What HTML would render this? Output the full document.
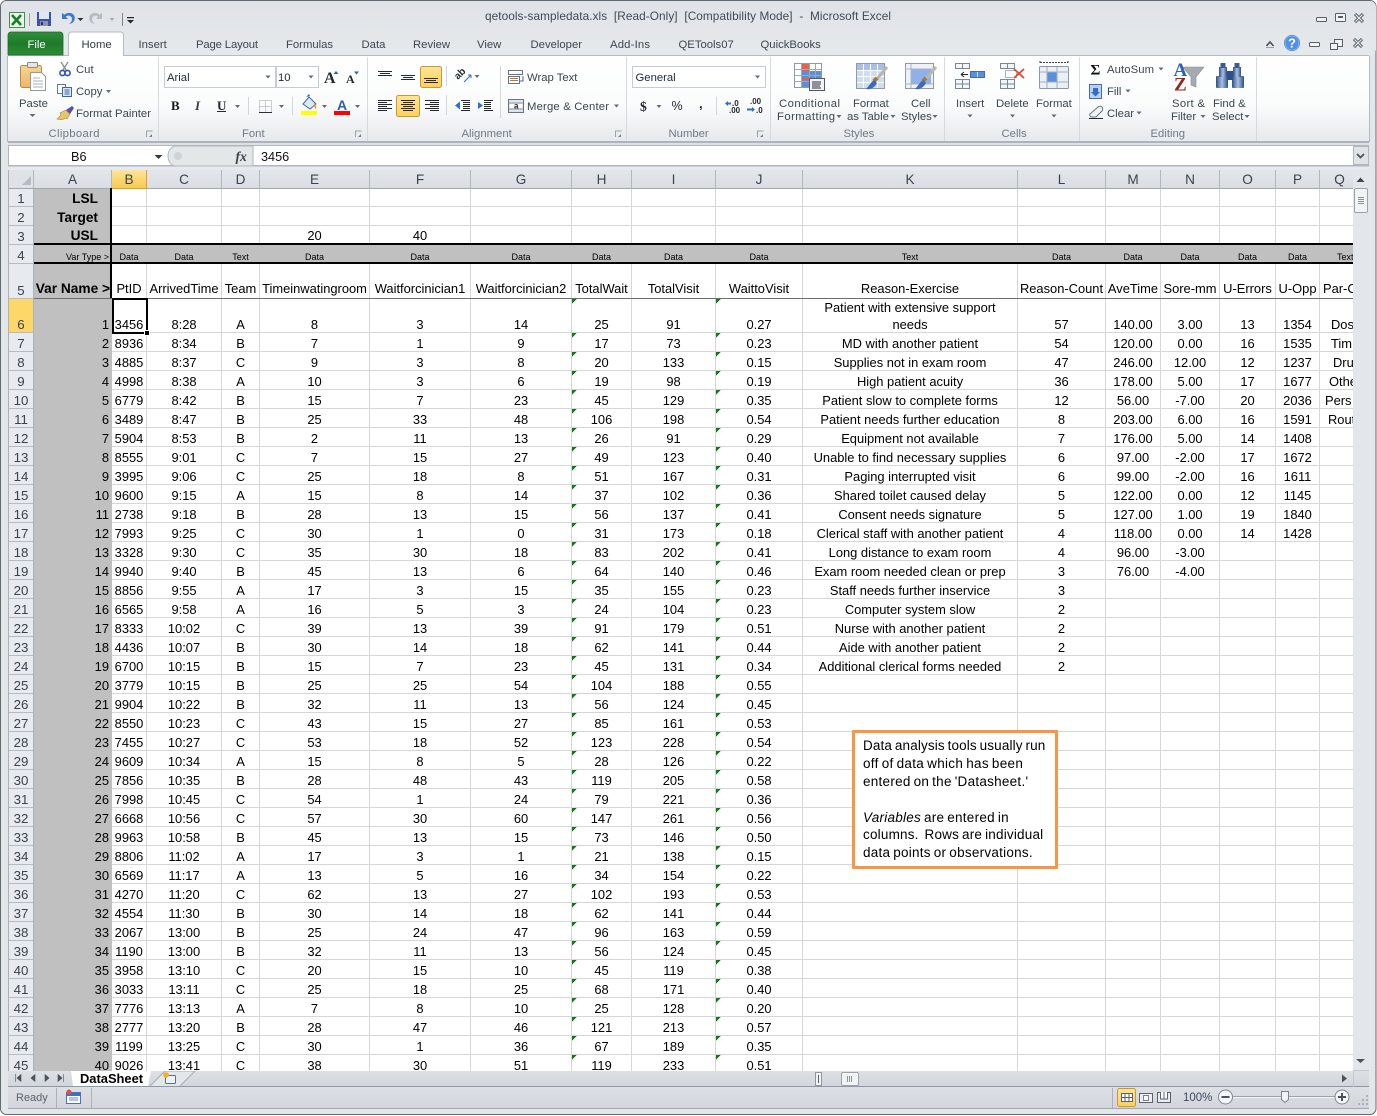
<!DOCTYPE html>
<html><head><meta charset="utf-8"><title>qetools-sampledata.xls - Microsoft Excel</title>
<style>
html,body{margin:0;padding:0;background:#fff}
#w{position:relative;width:1377px;height:1116px;overflow:hidden;background:#fff}
svg#c{position:absolute;left:0;top:0}
svg text{font-family:"Liberation Sans",sans-serif;font-size:11.3px;fill:#3c4650;white-space:pre}
.k{fill:#1e2a36}
.l{fill:#6f7a85}
.a{fill:#5f6b78}
.s{font-family:"Liberation Serif",serif}
#g{position:absolute;left:9px;top:170px;width:1344px;height:901px;overflow:hidden;background:#fff}
table{border-collapse:separate;border-spacing:0;table-layout:fixed;width:1351px}
tr{height:19px}
td,th{box-sizing:border-box;padding:0;white-space:nowrap;overflow:hidden;font-family:"Liberation Sans",sans-serif;font-weight:normal}
td{border-right:1px solid #d6d6d6;border-bottom:1px solid #d6d6d6;text-align:center;vertical-align:bottom;font-size:12.9px;line-height:14px;color:#000}
th{border-right:1px solid #a9b1bb;border-bottom:1px solid #b4bbc4;background:#e7ebf0;color:#39424d;font-size:13.3px;line-height:15px;text-align:center;vertical-align:bottom}
tr.h th{background:linear-gradient(#e3e6ea,#dadee3);vertical-align:middle;border-bottom:1px solid #9fa7b1;border-right:1px solid #b0b7bf;color:#3a434e;font-size:13.6px}
tr.h th.on{background:linear-gradient(#fde69a,#f9c94f);border-right:1px solid #e0a030;border-bottom:1px solid #e0a030}
th.on{background:#fdd768}
td:nth-child(2){background:#c0c0c0;text-align:right;border-color:#c0c0c0;padding-right:2px}
td:nth-child(9),td:nth-child(11){background:linear-gradient(135deg,#0b7d12 0,#0b7d12 3.4px,transparent 3.5px) no-repeat 0 0/6px 6px}
tr.n td:nth-child(9),tr.n td:nth-child(11){background:none}
td b{font-weight:bold;font-size:13.7px}
tr.t td:nth-child(2){padding-right:13px}
tr.r4 td{background:#c0c0c0!important;border-color:#c0c0c0;font-size:9px;line-height:11px;padding-bottom:0}
tr.r5 td{padding-bottom:1px;line-height:16px}
tr.r5 td:nth-child(2){padding-right:1px}
td.q{text-align:left;overflow:hidden}
.o{position:absolute}
#box{position:absolute;left:852px;top:730px;width:206px;height:139px;box-sizing:border-box;border:3px solid #f79646;background:#fff;padding:4px 0 0 8px;font:13.5px/17.9px "Liberation Sans",sans-serif;color:#000;word-spacing:-1px;white-space:pre;border-radius:1px}
#box span{display:block;height:17.9px}
</style></head><body><div id="w">
<svg id="c" width="1377" height="1116" viewBox="0 0 1377 1116" xmlns="http://www.w3.org/2000/svg">
<defs>
<linearGradient id="tb" x1="0" y1="0" x2="0" y2="1"><stop offset="0" stop-color="#dfe3e7"/><stop offset="1" stop-color="#e6e9ec"/></linearGradient>
<linearGradient id="rb" x1="0" y1="0" x2="0" y2="1"><stop offset="0" stop-color="#ffffff"/><stop offset=".55" stop-color="#fbfcfc"/><stop offset="1" stop-color="#e6e9ed"/></linearGradient>
<linearGradient id="gr" x1="0" y1="0" x2="0" y2="1"><stop offset="0" stop-color="#2f8f3a"/><stop offset=".5" stop-color="#1f7a2a"/><stop offset="1" stop-color="#2c8d33"/></linearGradient>
<linearGradient id="or" x1="0" y1="0" x2="0" y2="1"><stop offset="0" stop-color="#ffe596"/><stop offset="1" stop-color="#fdd05a"/></linearGradient>
<linearGradient id="sb" x1="0" y1="0" x2="0" y2="1"><stop offset="0" stop-color="#dde1e6"/><stop offset="1" stop-color="#d2d6dc"/></linearGradient>
<linearGradient id="bn" x1="0" y1="0" x2="1" y2="0"><stop offset="0" stop-color="#2f4f86"/><stop offset=".5" stop-color="#a9c0e2"/><stop offset="1" stop-color="#2f4f86"/></linearGradient>
<linearGradient id="pb" x1="0" y1="0" x2="0" y2="1"><stop offset="0" stop-color="#f7d596"/><stop offset="1" stop-color="#eeb566"/></linearGradient>
</defs>
<!-- frame -->
<rect x=".5" y=".5" width="1375.5" height="1114" rx="6" fill="#e4e7ea" stroke="#5e6a74"/>
<rect x="1" y="1" width="1375" height="54" rx="6" fill="url(#tb)"/>
<!-- QAT -->
<rect x="9.5" y="12.5" width="15" height="15" fill="#eef6e8" stroke="#4a8a4a"/>
<path d="M12 15l9 10M21 15l-9 10" stroke="#17802a" stroke-width="2.6" fill="none"/>
<path d="M29.500 13v13" stroke="#9aa3ac"/>
<rect x="37" y="12" width="14" height="14" fill="#3c50b4"/><rect x="39" y="12" width="10" height="7" fill="#dfe6f5"/><rect x="40" y="21" width="8" height="5" fill="#8c96a8"/><rect x="41" y="22" width="2" height="3" fill="#2a3470"/>
<path d="M62 13v6h6l-2.200-2.200c2.500-2.300 6-.8 6.200 2 .1 2-1 4-3 5.200 4.500-.5 6.500-4 5.500-7.500-1-3.500-6-5.200-10-1.900z" fill="#3c79c9"/>
<path d="M77.500 18h6l-3 3z" fill="#2a2f35"/>
<path d="M102 13v6h-6l2.200-2.200c-2.500-2.300-6-.8-6.200 2-.1 2 1 4 3 5.200-4.500-.5-6.500-4-5.500-7.500 1-3.500 6-5.200 10-1.900z" fill="#b6bbc0"/>
<path d="M109.500 18h5l-2.500 3z" fill="#a5abb1"/>
<path d="M122.500 13v13" stroke="#7d868f"/>
<path d="M127 17h7v1.200h-7zM127 20h7l-3.500 3.500z" fill="#23282e"/>
<text x="485" y="20" textLength="406" style="font-size:11.8px;fill:#3e4a56">qetools-sampledata.xls  [Read-Only]  [Compatibility Mode]  -  Microsoft Excel</text>
<!-- window controls -->
<rect x="1316.500" y="17.500" width="10" height="4" rx="1" fill="#f2f4f5" stroke="#56606b"/>
<rect x="1335.500" y="13.500" width="10" height="8" rx="1" fill="#f2f4f5" stroke="#56606b"/><rect x="1338" y="16" width="5" height="2" fill="#56606b"/>
<path d="M1355 14l8 8M1363 14l-8 8" stroke="#5d6873" stroke-width="3.200"/><path d="M1355.500 14.500l7 7M1362.500 14.500l-7 7" stroke="#eef0f2" stroke-width="1"/>
<path d="M1266.500 46l3.500-4 3.500 4" fill="none" stroke="#48525c" stroke-width="1.600"/><path d="M1266 47.500h8" stroke="#9ba3ab"/>
<circle cx="1292" cy="43" r="8" fill="#3f83d6"/><circle cx="1292" cy="43" r="7" fill="#4f92e0" stroke="#a9cbf0" stroke-width=".6"/>
<text x="1292" y="47.500" text-anchor="middle" style="font-size:13px;font-weight:bold;fill:#fff">?</text>
<rect x="1309.500" y="42.500" width="10" height="4" rx="1" fill="#f2f4f5" stroke="#56606b"/>
<rect x="1334.500" y="39.500" width="8" height="7" fill="#f2f4f5" stroke="#56606b"/><rect x="1330.500" y="43.500" width="7" height="6" fill="#f2f4f5" stroke="#56606b"/>
<path d="M1354 39l8 8M1362 39l-8 8" stroke="#5d6873" stroke-width="3.200"/><path d="M1354.500 39.500l7 7M1361.500 39.500l-7 7" stroke="#eef0f2" stroke-width="1"/>
<!-- tabs -->
<path d="M8 55.500h1361" stroke="#b4bbc2"/>
<path d="M8 55v-20a3 3 0 0 1 3-3h49a3 3 0 0 1 3 3v20z" fill="url(#gr)" stroke="#1d6c27" stroke-width=".8"/>
<text x="27.500" y="48" style="fill:#fff;font-size:11.300px">File</text>
<path d="M68.500 56v-21a3 3 0 0 1 3-3h49a3 3 0 0 1 3 3v21z" fill="#fff" stroke="#b4bbc2"/>
<text x="81.500" y="48" style="fill:#2e3842">Home</text>
<g class="tabs">
<text x="138.500" y="48">Insert</text><text x="196" y="48" textLength="62">Page Layout</text><text x="286" y="48">Formulas</text><text x="361.500" y="48">Data</text><text x="413" y="48">Review</text><text x="477" y="48">View</text><text x="530.500" y="48">Developer</text><text x="610" y="48" textLength="40">Add-Ins</text><text x="678.500" y="48">QETools07</text><text x="760.500" y="48">QuickBooks</text>
</g>
<!-- ribbon -->
<rect x="8" y="56" width="1361" height="86" fill="url(#rb)"/>
<rect x="69" y="54" width="54" height="3" fill="#fff"/>
<path d="M7.500 56v86M1369.500 56v86" stroke="#b4bbc2"/>
<path d="M8 142h1361" stroke="#9aa2aa" stroke-width="1.400"/><rect x="8" y="143" width="1361" height="3" fill="#dde1e5"/>
<g stroke="#d6dade"><path d="M158.500 57v84M367.500 57v84M626.500 57v84M770.500 57v84M944.500 57v84M1079.500 57v84M1256.500 57v84"/></g>
<g class="grp">
<text x="48.500" y="137" textLength="51" style="fill:#6f7a85">Clipboard</text><text x="242" y="137" style="fill:#6f7a85">Font</text><text x="461.500" y="137" style="fill:#6f7a85">Alignment</text><text x="668.500" y="137" style="fill:#6f7a85">Number</text><text x="843.500" y="137" style="fill:#6f7a85">Styles</text><text x="1001.500" y="137" style="fill:#6f7a85">Cells</text><text x="1150.500" y="137" style="fill:#6f7a85">Editing</text>
</g>
<g fill="none" stroke="#9aa2aa"><path d="M146.500 137v-6h6M355.500 137v-6h6M615.500 137v-6h6M757.500 137v-6h6"/></g>
<g fill="#7a838c"><path d="M149 137l3-3v3zM358 137l3-3v3zM618 137l3-3v3zM760 137l3-3v3z"/></g>
<!-- clipboard -->
<rect x="20.500" y="65.500" width="21" height="22" rx="2" fill="url(#pb)" stroke="#b58a4a"/>
<rect x="27.500" y="62.500" width="10" height="5" rx="1" fill="#e7e7e2" stroke="#8c8c84"/>
<path d="M30.500 72.500h11l4 4v14h-15z" fill="#fff" stroke="#8f9aa6"/>
<path d="M33 78h7M33 81h10M33 84h10M33 87h10" stroke="#a8b1bb"/>
<text x="19" y="107">Paste</text><path class="a" d="M29.500 114h6l-3 3z"/>
<path d="M61 62l5 8M68 62l-5 8" stroke="#8b95a1" stroke-width="1.500"/><circle cx="62.500" cy="73" r="2.600" fill="none" stroke="#2c54b0" stroke-width="1.600"/><circle cx="67.500" cy="73" r="2.600" fill="none" stroke="#2c54b0" stroke-width="1.600"/>
<text x="76" y="73">Cut</text>
<rect x="57.500" y="84.500" width="8" height="9" fill="#fff" stroke="#5b78a8"/><rect x="62.500" y="87.500" width="9" height="9" fill="#dbe6f6" stroke="#3e64a6"/><path d="M64.500 90h5M64.500 92h5M64.500 94h5" stroke="#3e64a6"/>
<text x="76" y="95">Copy</text><path class="a" d="M106 90h5l-2.500 3z"/>
<path d="M57 119c2-1 3-3 4-5l-1-1 6-3 4 4-3 5-2-1c-2 2-5 2-8 1z" fill="#e7c66a" stroke="#a78a3a" stroke-width=".6"/><path d="M66 110l6-4 2 2-4 6z" fill="#5b4fa8"/>
<text x="76" y="117" textLength="75">Format Painter</text>
<!-- font -->
<rect x="164.500" y="66.500" width="111" height="21" fill="#fff" stroke="#c6ccd3"/><rect x="276.500" y="66.500" width="42" height="21" fill="#fff" stroke="#c6ccd3"/>
<text x="167" y="81" style="fill:#1e2a36">Arial</text><text x="278" y="81" style="fill:#1e2a36">10</text>
<path class="a" d="M265.500 75.500h5l-2.500 3zM308.500 75.500h5l-2.500 3z"/>
<text x="324" y="83" style="font-family:'Liberation Serif',serif;font-size:16px;font-weight:bold;fill:#22282e">A</text><path d="M333.500 74l2.500-3 2.500 3z" fill="#2d5fb0"/>
<text x="346" y="83" style="font-family:'Liberation Serif',serif;font-size:12px;font-weight:bold;fill:#22282e">A</text><path d="M354 71.500h5l-2.500 3z" fill="#2d5fb0"/>
<text x="171" y="110" style="font-family:'Liberation Serif',serif;font-size:13px;font-weight:bold;fill:#15191d">B</text>
<text x="195" y="110" style="font-family:'Liberation Serif',serif;font-size:13px;font-weight:bold;font-style:italic;fill:#3a3f45">I</text>
<text x="217" y="110" style="font-family:'Liberation Serif',serif;font-size:13px;font-weight:bold;fill:#22282e">U</text><path d="M217 111.500h9" stroke="#22282e"/>
<path class="a" d="M235 105h5l-2.500 3zM279 105h5l-2.500 3zM322 105h5l-2.500 3zM355 105h5l-2.500 3z"/>
<path d="M248.500 97v18M292.500 97v18" stroke="#d2d6da"/>
<path d="M259.500 100.500h12v12h-12zM265.500 100.500v12M259.500 106.500h12" fill="none" stroke="#9aa2aa" stroke-dasharray="1 1"/><path d="M259 112.500h13" stroke="#2a2f35"/>
<path d="M303 104l6-7 7 7-6 5z" fill="#dfe8f5" stroke="#3e6cb0"/><path d="M306 97l3-3 1 2z" fill="#3e6cb0"/><path d="M314 103c2 2 3 4 2 6-1 0-2-2-2-6z" fill="#e6a020"/><rect x="301" y="111" width="16" height="4" fill="#ffff00"/>
<text x="337" y="110" style="font-size:14px;font-weight:bold;fill:#2f5fa8">A</text><rect x="334" y="111" width="16" height="4" fill="#ff0000"/>
<!-- alignment -->
<rect x="420.500" y="66.500" width="21" height="21" rx="2" fill="url(#or)" stroke="#c29a3c"/>
<rect x="396.500" y="95.500" width="23" height="21" rx="2" fill="url(#or)" stroke="#c29a3c"/>
<g stroke="#23282e"><path d="M378 71.500h14M380 73.500h10M378 75.500h14"/><path d="M401 75.500h14M403 77.500h10M401 79.500h14"/><path d="M424 78.500h14M426 80.500h10M424 82.500h14"/>
<path d="M378 100.500h14M378 102.500h9M378 104.500h14M378 106.500h9M378 108.500h14M378 110.500h9"/>
<path d="M401 100.500h14M403 102.500h10M401 104.500h14M403 106.500h10M401 108.500h14M403 110.500h10"/>
<path d="M425 100.500h14M430 102.500h9M425 104.500h14M430 106.500h9M425 108.500h14M430 110.500h9"/></g>
<path d="M446.500 66v20M446.500 95v20M500.500 66v52" stroke="#d4d8dc"/>
<text x="0" y="0" transform="translate(458 80) rotate(-45)" style="font-size:10px;font-weight:bold;fill:#23282e">ab</text><path d="M464 82l7-7M471 75h-3M471 75v3" stroke="#3a6cb0" fill="none"/>
<path class="a" d="M474.500 75h5l-2.500 3z"/>
<path d="M461 100.500h9M463 102.500h7M463 104.500h7M463 106.500h7M463 108.500h7M461 110.500h9M484 100.500h9M484 102.500h7M484 104.500h7M484 106.500h7M484 108.500h7M484 110.500h9" stroke="#23282e"/>
<path d="M455 105.500l5-4v8zM478 102v7l5-3.500z" fill="#2f6fc8"/>
<rect x="508.500" y="70.500" width="14" height="4" fill="#fff" stroke="#6a7480"/><rect x="508.500" y="76.500" width="11" height="7" fill="#fff" stroke="#6a7480"/><path d="M510 78.500h8M510 80.500h8" stroke="#b5763a"/><path d="M523 76v5h-3" fill="none" stroke="#3a6cb0"/>
<text x="527" y="81">Wrap Text</text>
<rect x="508.500" y="99.500" width="15" height="13" fill="#dfe5ec" stroke="#6a7480"/><path d="M509 103h14M509 109h14" stroke="#8f99a4"/><rect x="510" y="104" width="12" height="4" fill="#fff"/><text x="514" y="108.500" style="font-size:8px;font-weight:bold;fill:#23282e">a</text>
<text x="527" y="110" textLength="82">Merge &amp; Center</text><path class="a" d="M614 104.500h5l-2.500 3z"/>
<!-- number -->
<rect x="632.500" y="66.500" width="133" height="21" fill="#fff" stroke="#c6ccd3"/>
<text x="635.500" y="81" style="fill:#1e2a36">General</text><path class="a" d="M755 75.500h5l-2.500 3z"/>
<text x="640" y="111" style="font-family:'Liberation Serif',serif;font-size:13.500px;font-weight:bold;fill:#22282e">$</text>
<path class="a" d="M656.500 105h5l-2.500 3z"/>
<text x="671.500" y="110" style="font-size:12.500px;fill:#22282e">%</text>
<text x="699" y="108" style="font-size:13px;font-weight:bold;fill:#22282e">,</text>
<path d="M716.500 97v18" stroke="#d2d6da"/>
<text x="732" y="106" style="font-size:8px;font-weight:bold;fill:#22282e">.0</text><text x="729" y="113" style="font-size:8px;font-weight:bold;fill:#22282e">.00</text><path d="M725 103.500l3-2.500v1.500h3v2h-3v1.500z" fill="#2f6fc8"/>
<text x="750" y="104" style="font-size:8px;font-weight:bold;fill:#22282e">.00</text><text x="756" y="113" style="font-size:8px;font-weight:bold;fill:#22282e">.0</text><path d="M755 109.500l-3-2.500v1.500h-5v2h5v1.500z" fill="#2f6fc8"/>
<!-- styles -->
<g fill="#fff" stroke="#8f9aa6"><rect x="794.500" y="63.500" width="27" height="24"/></g>
<rect x="802" y="64" width="7" height="23" fill="#ef5d45"/><rect x="802" y="71" width="19" height="7" fill="#5b8fdc"/>
<rect x="802" y="80" width="7" height="7" fill="#5b8fdc"/>
<path d="M801.500 64v23M809.500 64v23M815.500 64v23M795 69.500h26M795 75.500h26M795 81.500h26" stroke="#9fa9b4"/>
<rect x="809.500" y="78.500" width="15" height="12" fill="#f2f4f6" stroke="#4f5a66"/><path d="M812 82h9M812 84h9M812 86l8 0M812 88h9" stroke="#2a2f35"/>
<text x="779" y="107" textLength="61">Conditional</text><text x="777" y="120" textLength="58">Formatting</text><path class="a" d="M836.500 115h5l-2.500 3z"/>
<rect x="856.500" y="63.500" width="28" height="25" fill="#cfdcf2" stroke="#8f9aa6"/><rect x="857" y="64" width="27" height="6" fill="#a9c0e6"/>
<path d="M863.500 64v24M870.500 64v24M877.500 64v24M857 70.500h27M857 76.500h27M857 82.500h27" stroke="#fff"/>
<path d="M887 67l-11 13" stroke="#b9b7a8" stroke-width="3"/><path d="M877 78l-3 3" stroke="#a07a3a" stroke-width="4"/><path d="M874 80c-3 2-5 6-8 9 5 1 9-2 11-6z" fill="#3d6cb8"/>
<text x="853" y="107">Format</text><text x="847" y="120">as Table</text><path class="a" d="M890.500 115h5l-2.500 3z"/>
<rect x="905.500" y="63.500" width="28" height="25" fill="#eef2f8" stroke="#8f9aa6"/><rect x="911" y="69" width="20" height="15" fill="#8fb0ea"/>
<path d="M911 64v24M905 69h28M905 84h28" stroke="#aab4c0"/>
<path d="M936 67l-11 13" stroke="#b9b7a8" stroke-width="3"/><path d="M926 78l-3 3" stroke="#a07a3a" stroke-width="4"/><path d="M923 80c-3 2-5 6-8 9 5 1 9-2 11-6z" fill="#3d6cb8"/>
<text x="911" y="107">Cell</text><text x="901" y="120">Styles</text><path class="a" d="M932.500 115h5l-2.500 3z"/>
<!-- cells -->
<g fill="#f3f6fa" stroke="#7a8794"><rect x="955.500" y="63.500" width="14" height="5"/><path d="M962.500 64v4"/><rect x="955.500" y="79.500" width="14" height="9"/><path d="M962.500 80v8M956 84h13"/></g>
<rect x="970.500" y="71.500" width="14" height="6" fill="#5b8fdc" stroke="#3d6cb8"/><path d="M977.500 72v5" stroke="#cfe0f8"/>
<path d="M961 74.500h7M961 74.500l3-2.500M961 74.500l3 2.500" stroke="#23282e" fill="none"/>
<g fill="#f3f6fa" stroke="#7a8794"><rect x="1000.500" y="63.500" width="14" height="5"/><path d="M1007.500 64v4"/><rect x="1000.500" y="79.500" width="14" height="9"/><path d="M1007.500 80v8M1001 84h13"/></g>
<rect x="1005.500" y="70.500" width="11" height="7" fill="#fff" stroke="#3d6cb8" stroke-dasharray="1 1"/>
<path d="M1014 69l10 9M1024 69l-10 9" stroke="#e8432e" stroke-width="1.800"/>
<path d="M1040 62.500h28M1040 61v3M1068 61v3" stroke="#3a424b" stroke-dasharray="2 1"/>
<rect x="1039.500" y="66.500" width="29" height="22" rx="1" fill="#eaf0f8" stroke="#8a97a5"/><rect x="1047" y="72" width="10" height="10" fill="#5b8fdc"/>
<path d="M1047 67v21M1057 67v21M1040 72h29M1040 82h29" stroke="#a3aeba"/>
<text x="956" y="107">Insert</text><text x="996" y="107">Delete</text><text x="1036" y="107">Format</text>
<path class="a" d="M967.500 114.500h5l-2.500 3zM1010 114.500h5l-2.500 3zM1051.500 114.500h5l-2.500 3z"/>
<!-- editing -->
<text x="1090.500" y="74.500" style="font-family:'Liberation Serif',serif;font-size:15px;font-weight:bold;fill:#111">Σ</text>
<text x="1107" y="73" textLength="47">AutoSum</text><path class="a" d="M1158.500 67.500h5l-2.500 3z"/>
<rect x="1089.500" y="84.500" width="12" height="14" fill="#bcd2f0" stroke="#3d6cb8"/><path d="M1093 88h5v4h2l-4.500 4.500-4.500-4.500h2z" fill="#2f6fc8"/>
<text x="1107" y="95">Fill</text><path class="a" d="M1125.500 89.500h5l-2.500 3z"/>
<path d="M1090 114l8-7c1-1 3-1 4 0 1 1 1 3 0 4l-6 6h-5c-1-1-2-2-1-3z" fill="#eef1f5" stroke="#6a7480"/><path d="M1089 118.500h14" stroke="#23282e"/>
<text x="1107" y="117">Clear</text><path class="a" d="M1136.500 111.500h5l-2.500 3z"/>
<path d="M1183 67h21l-8 10v10l-5-2v-8z" fill="#a4aab0" stroke="#868c92" stroke-width=".6"/>
<text x="1173.500" y="76" style="font-family:'Liberation Serif',serif;font-size:19px;font-weight:bold;fill:#2e62b4">A</text>
<text x="1174" y="90.500" style="font-family:'Liberation Serif',serif;font-size:19px;font-weight:bold;fill:#8a2a22">Z</text>
<text x="1172" y="107" textLength="33">Sort &amp;</text><text x="1171" y="120">Filter</text><path class="a" d="M1200.500 115h5l-2.500 3z"/>
<rect x="1216" y="76" width="12" height="12" rx="1" fill="url(#bn)"/><rect x="1232" y="76" width="12" height="12" rx="1" fill="url(#bn)"/>
<rect x="1219" y="67" width="8" height="10" fill="url(#bn)"/><rect x="1233" y="67" width="8" height="10" fill="url(#bn)"/>
<rect x="1220.500" y="63" width="5" height="5" fill="#3a5a94"/><rect x="1234.500" y="63" width="5" height="5" fill="#3a5a94"/><rect x="1227" y="71" width="6" height="9" fill="#2f4f86"/>
<text x="1213" y="107">Find &amp;</text><text x="1212" y="120">Select</text><path class="a" d="M1244.500 115h5l-2.500 3z"/>
<!-- formula bar -->
<rect x="8.500" y="145.500" width="1360" height="20" fill="#fff" stroke="#b0b7be"/>
<text x="71" y="161" style="font-size:12.700px;fill:#111">B6</text>
<path d="M154.500 155h8l-4 4z" fill="#33393f"/>
<path d="M253 146h-77c-5 0-8 5-8 10s3 10 8 10h77z" fill="#e4e7ea" stroke="#b0b7be"/>
<circle cx="178" cy="156" r="4" fill="#cfd3d7"/>
<text x="235.500" y="161" style="font-family:'Liberation Serif',serif;font-size:13.500px;font-style:italic;font-weight:bold;fill:#3a4046">fx</text>
<text x="261" y="161" style="font-size:12.700px;fill:#111">3456</text>
<rect x="1353.500" y="146.500" width="15" height="18" fill="#dfe3e7" stroke="#b0b7be"/><path d="M1357 154l3.500 3.500 3.500-3.500" fill="none" stroke="#4a535c" stroke-width="1.800"/>
<rect x="9" y="166" width="1360" height="4" fill="#e6eaf0"/>
<path d="M8 166h1361" stroke="#b0b7be"/>
<rect x="8" y="170" width="1" height="901" fill="#aab1b9"/>
<!-- vscroll -->
<rect x="1353" y="170" width="16" height="917" fill="#e3e7ec"/>
<path d="M1356.500 182l4-4.500 4 4.500z" fill="#3e464e"/>
<rect x="1354.500" y="188.500" width="13" height="24" rx="1.500" fill="#f1f3f5" stroke="#9aa2aa"/>
<path d="M1358 197.500h6M1358 199.500h6M1358 201.500h6M1358 203.500h6" stroke="#8a929a"/>
<path d="M1356 1059h9l-4.500 4z" fill="#4a525a"/><path d="M1353 1070.500h16" stroke="#c4c9cf"/>
<!-- sheet tabs -->
<rect x="8" y="1071" width="1361" height="16" fill="url(#sb)"/>
<path d="M8 1086.500h1361" stroke="#8f98a1"/>
<path d="M15.500 1074v8M21 1074.500l-4 3.500 4 3.500zM35 1074.500l-4 3.500 4 3.500zM45 1074.500l4 3.500-4 3.500zM58 1074.500l4 3.500-4 3.500zM63.500 1074v8" fill="#4a525a" stroke="#4a525a" stroke-width=".6"/>
<path d="M71 1071h80l-3 15h-75z" fill="#fff"/>
<text x="80" y="1083" style="font-size:12.900px;font-weight:bold;fill:#000">DataSheet</text>
<path d="M150 1086l15-15h30l-15 15" fill="#e4e7ea" stroke="#a5adb5"/>
<rect x="165.500" y="1075.500" width="10" height="8" rx="1" fill="#eef2f7" stroke="#5b6f85"/><circle cx="166" cy="1075" r="2.800" fill="#f4b020"/>
<!-- hscroll -->
<rect x="815.500" y="1072.500" width="6" height="13" fill="#f1f3f5" stroke="#8f98a1"/><path d="M818.500 1075v8" stroke="#5a636c"/>
<rect x="841.500" y="1072.500" width="17" height="13" rx="1.500" fill="#f1f3f5" stroke="#9aa2aa"/><path d="M847.500 1076v6M849.500 1076v6M851.500 1076v6" stroke="#8a929a"/>
<path d="M1342 1074.500l5 4-5 4z" fill="#4a525a"/>
<path d="M1353.500 1071v16" stroke="#c4c9cf"/>
<!-- status -->
<rect x="8" y="1087" width="1361" height="21" fill="url(#sb)"/><path d="M8 1108.500h1361" stroke="#a0a8b0"/>
<text x="16" y="1101" style="fill:#5a636c;font-size:11px">Ready</text>
<path d="M56.500 1088v20M91.500 1088v20M1112.500 1088v20" stroke="#aab1b9"/>
<rect x="66.500" y="1092.500" width="14" height="11" fill="#fff" stroke="#4a72b4"/><rect x="67" y="1093" width="13" height="3" fill="#3f6fc0"/><path d="M69 1098h9M69 1100h9" stroke="#6a8ac4"/><circle cx="69" cy="1092" r="2.500" fill="#e4503a"/>
<rect x="1117.500" y="1088.500" width="18" height="18" rx="2" fill="url(#or)" stroke="#c29a3c"/>
<path d="M1121.500 1093.500h11v8h-11zM1125 1094v8M1129 1094v8M1122 1097.500h11" fill="#fff" stroke="#5a636c"/>
<rect x="1139.500" y="1093.500" width="13" height="9" fill="#eceff2" stroke="#5a636c"/><rect x="1143.500" y="1095.500" width="5" height="5" fill="#fff" stroke="#7a838c"/>
<rect x="1157.500" y="1092.500" width="13" height="10" fill="#e7eaee" stroke="#5a636c"/><path d="M1160.500 1092v7h7v-7" fill="#fff" stroke="#5a636c"/><path d="M1164 1092v7" stroke="#5a636c"/>
<text x="1183" y="1101" style="fill:#3e4a60;font-size:11.500px">100%</text>
<path d="M1233 1096.500h102" stroke="#9aa2aa"/><path d="M1233 1097.500h102" stroke="#f2f4f6"/>
<circle cx="1225.500" cy="1097" r="7" fill="#f4f6f8" stroke="#7d868f"/><path d="M1221.500 1097h8" stroke="#4a525a" stroke-width="2"/>
<circle cx="1342" cy="1097" r="7" fill="#f4f6f8" stroke="#7d868f"/><path d="M1338 1097h8M1342 1093v8" stroke="#4a525a" stroke-width="2"/>
<path d="M1281.500 1091.500h7v8l-3.500 3-3.500-3z" fill="#f1f3f5" stroke="#7d868f"/>
<g fill="#aab1b9"><rect x="1366" y="1095" width="2" height="2"/><rect x="1362" y="1099" width="2" height="2"/><rect x="1366" y="1099" width="2" height="2"/><rect x="1358" y="1103" width="2" height="2"/><rect x="1362" y="1103" width="2" height="2"/><rect x="1366" y="1103" width="2" height="2"/></g>
</svg>
<div id="g"><table>
<colgroup><col style="width:25px"><col style="width:78px"><col style="width:35px"><col style="width:75px"><col style="width:38px"><col style="width:110px"><col style="width:101px"><col style="width:101px"><col style="width:60px"><col style="width:84px"><col style="width:87px"><col style="width:215px"><col style="width:88px"><col style="width:55px"><col style="width:59px"><col style="width:56px"><col style="width:44px"><col style="width:40px"></colgroup>
<tr class="h" style="height:19px"><th style="background:#dfe3e8"></th><th>A</th><th class="on">B</th><th>C</th><th>D</th><th>E</th><th>F</th><th>G</th><th>H</th><th>I</th><th>J</th><th>K</th><th>L</th><th>M</th><th>N</th><th>O</th><th>P</th><th>Q</th></tr>
<tr class="n t" style="height:18px"><th>1</th><td><b>LSL</b><td><td><td><td><td><td><td><td><td><td><td><td><td><td><td><td></tr>
<tr class="n t"><th>2</th><td><b>Target</b><td><td><td><td><td><td><td><td><td><td><td><td><td><td><td><td></tr>
<tr class="n t"><th>3</th><td style="padding-bottom:1px"><b>USL</b><td><td><td><td style="padding-bottom:1px">20<td style="padding-bottom:1px">40<td><td><td><td><td><td><td><td><td><td><td></tr>
<tr class="n r4"><th>4</th><td>Var Type &gt;<td>Data<td>Data<td>Text<td>Data<td>Data<td>Data<td>Data<td>Data<td>Data<td>Text<td>Data<td>Data<td>Data<td>Data<td>Data<td class="q" style="padding-left:17px">Text</tr>
<tr class="n r5" style="height:35px"><th>5</th><td><b>Var Name &gt;</b><td>PtID<td>ArrivedTime<td>Team<td>Timeinwatingroom<td>Waitforcinician1<td>Waitforcinician2<td>TotalWait<td>TotalVisit<td>WaittoVisit<td>Reason-Exercise<td>Reason-Count<td>AveTime<td>Sore-mm<td>U-Errors<td>U-Opp<td class="q" style="padding-left:3px">Par-C</tr>
<tr style="height:34px"><th class="on">6</th><td>1<td>3456<td>8:28<td>A<td>8<td>3<td>14<td>25<td>91<td>0.27<td><div style="line-height:17px;margin-bottom:-1px">Patient with extensive support<br>needs</div><td>57<td>140.00<td>3.00<td>13<td>1354<td class="q" style="padding-left:11px">Dos</tr>
<tr><th>7</th><td>2<td>8936<td>8:34<td>B<td>7<td>1<td>9<td>17<td>73<td>0.23<td>MD with another patient<td>54<td>120.00<td>0.00<td>16<td>1535<td class="q" style="padding-left:11px">Tim</tr>
<tr><th>8</th><td>3<td>4885<td>8:37<td>C<td>9<td>3<td>8<td>20<td>133<td>0.15<td>Supplies not in exam room<td>47<td>246.00<td>12.00<td>12<td>1237<td class="q" style="padding-left:13px">Dru</tr>
<tr><th>9</th><td>4<td>4998<td>8:38<td>A<td>10<td>3<td>6<td>19<td>98<td>0.19<td>High patient acuity<td>36<td>178.00<td>5.00<td>17<td>1677<td class="q" style="padding-left:9px">Othe</tr>
<tr><th>10</th><td>5<td>6779<td>8:42<td>B<td>15<td>7<td>23<td>45<td>129<td>0.35<td>Patient slow to complete forms<td>12<td>56.00<td>-7.00<td>20<td>2036<td class="q" style="padding-left:5px">Pers</tr>
<tr><th>11</th><td>6<td>3489<td>8:47<td>B<td>25<td>33<td>48<td>106<td>198<td>0.54<td>Patient needs further education<td>8<td>203.00<td>6.00<td>16<td>1591<td class="q" style="padding-left:8px">Rout</tr>
<tr><th>12</th><td>7<td>5904<td>8:53<td>B<td>2<td>11<td>13<td>26<td>91<td>0.29<td>Equipment not available<td>7<td>176.00<td>5.00<td>14<td>1408<td></tr>
<tr><th>13</th><td>8<td>8555<td>9:01<td>C<td>7<td>15<td>27<td>49<td>123<td>0.40<td>Unable to find necessary supplies<td>6<td>97.00<td>-2.00<td>17<td>1672<td></tr>
<tr><th>14</th><td>9<td>3995<td>9:06<td>C<td>25<td>18<td>8<td>51<td>167<td>0.31<td>Paging interrupted visit<td>6<td>99.00<td>-2.00<td>16<td>1611<td></tr>
<tr><th>15</th><td>10<td>9600<td>9:15<td>A<td>15<td>8<td>14<td>37<td>102<td>0.36<td>Shared toilet caused delay<td>5<td>122.00<td>0.00<td>12<td>1145<td></tr>
<tr><th>16</th><td>11<td>2738<td>9:18<td>B<td>28<td>13<td>15<td>56<td>137<td>0.41<td>Consent needs signature<td>5<td>127.00<td>1.00<td>19<td>1840<td></tr>
<tr><th>17</th><td>12<td>7993<td>9:25<td>C<td>30<td>1<td>0<td>31<td>173<td>0.18<td>Clerical staff with another patient<td>4<td>118.00<td>0.00<td>14<td>1428<td></tr>
<tr><th>18</th><td>13<td>3328<td>9:30<td>C<td>35<td>30<td>18<td>83<td>202<td>0.41<td>Long distance to exam room<td>4<td>96.00<td>-3.00<td><td><td></tr>
<tr><th>19</th><td>14<td>9940<td>9:40<td>B<td>45<td>13<td>6<td>64<td>140<td>0.46<td>Exam room needed clean or prep<td>3<td>76.00<td>-4.00<td><td><td></tr>
<tr><th>20</th><td>15<td>8856<td>9:55<td>A<td>17<td>3<td>15<td>35<td>155<td>0.23<td>Staff needs further inservice<td>3<td><td><td><td><td></tr>
<tr><th>21</th><td>16<td>6565<td>9:58<td>A<td>16<td>5<td>3<td>24<td>104<td>0.23<td>Computer system slow<td>2<td><td><td><td><td></tr>
<tr><th>22</th><td>17<td>8333<td>10:02<td>C<td>39<td>13<td>39<td>91<td>179<td>0.51<td>Nurse with another patient<td>2<td><td><td><td><td></tr>
<tr><th>23</th><td>18<td>4436<td>10:07<td>B<td>30<td>14<td>18<td>62<td>141<td>0.44<td>Aide with another patient<td>2<td><td><td><td><td></tr>
<tr><th>24</th><td>19<td>6700<td>10:15<td>B<td>15<td>7<td>23<td>45<td>131<td>0.34<td>Additional clerical forms needed<td>2<td><td><td><td><td></tr>
<tr><th>25</th><td>20<td>3779<td>10:15<td>B<td>25<td>25<td>54<td>104<td>188<td>0.55<td><td><td><td><td><td><td></tr>
<tr><th>26</th><td>21<td>9904<td>10:22<td>B<td>32<td>11<td>13<td>56<td>124<td>0.45<td><td><td><td><td><td><td></tr>
<tr><th>27</th><td>22<td>8550<td>10:23<td>C<td>43<td>15<td>27<td>85<td>161<td>0.53<td><td><td><td><td><td><td></tr>
<tr><th>28</th><td>23<td>7455<td>10:27<td>C<td>53<td>18<td>52<td>123<td>228<td>0.54<td><td><td><td><td><td><td></tr>
<tr><th>29</th><td>24<td>9609<td>10:34<td>A<td>15<td>8<td>5<td>28<td>126<td>0.22<td><td><td><td><td><td><td></tr>
<tr><th>30</th><td>25<td>7856<td>10:35<td>B<td>28<td>48<td>43<td>119<td>205<td>0.58<td><td><td><td><td><td><td></tr>
<tr><th>31</th><td>26<td>7998<td>10:45<td>C<td>54<td>1<td>24<td>79<td>221<td>0.36<td><td><td><td><td><td><td></tr>
<tr><th>32</th><td>27<td>6668<td>10:56<td>C<td>57<td>30<td>60<td>147<td>261<td>0.56<td><td><td><td><td><td><td></tr>
<tr><th>33</th><td>28<td>9963<td>10:58<td>B<td>45<td>13<td>15<td>73<td>146<td>0.50<td><td><td><td><td><td><td></tr>
<tr><th>34</th><td>29<td>8806<td>11:02<td>A<td>17<td>3<td>1<td>21<td>138<td>0.15<td><td><td><td><td><td><td></tr>
<tr><th>35</th><td>30<td>6569<td>11:17<td>A<td>13<td>5<td>16<td>34<td>154<td>0.22<td><td><td><td><td><td><td></tr>
<tr><th>36</th><td>31<td>4270<td>11:20<td>C<td>62<td>13<td>27<td>102<td>193<td>0.53<td><td><td><td><td><td><td></tr>
<tr><th>37</th><td>32<td>4554<td>11:30<td>B<td>30<td>14<td>18<td>62<td>141<td>0.44<td><td><td><td><td><td><td></tr>
<tr><th>38</th><td>33<td>2067<td>13:00<td>B<td>25<td>24<td>47<td>96<td>163<td>0.59<td><td><td><td><td><td><td></tr>
<tr><th>39</th><td>34<td>1190<td>13:00<td>B<td>32<td>11<td>13<td>56<td>124<td>0.45<td><td><td><td><td><td><td></tr>
<tr><th>40</th><td>35<td>3958<td>13:10<td>C<td>20<td>15<td>10<td>45<td>119<td>0.38<td><td><td><td><td><td><td></tr>
<tr><th>41</th><td>36<td>3033<td>13:11<td>C<td>25<td>18<td>25<td>68<td>171<td>0.40<td><td><td><td><td><td><td></tr>
<tr><th>42</th><td>37<td>7776<td>13:13<td>A<td>7<td>8<td>10<td>25<td>128<td>0.20<td><td><td><td><td><td><td></tr>
<tr><th>43</th><td>38<td>2777<td>13:20<td>B<td>28<td>47<td>46<td>121<td>213<td>0.57<td><td><td><td><td><td><td></tr>
<tr><th>44</th><td>39<td>1199<td>13:25<td>C<td>30<td>1<td>36<td>67<td>189<td>0.35<td><td><td><td><td><td><td></tr>
<tr><th>45</th><td>40<td>9026<td>13:41<td>C<td>38<td>30<td>51<td>119<td>233<td>0.51<td><td><td><td><td><td><td></tr>
</table></div>
<!-- overlays -->
<div class="o" style="left:34px;top:243px;width:1319px;height:2px;background:#000"></div>
<div class="o" style="left:34px;top:262px;width:1319px;height:2px;background:#000"></div>
<div class="o" style="left:34px;top:298px;width:1319px;height:1px;background:#6e6e6e"></div>
<div class="o" style="left:110px;top:188px;width:2px;height:110px;background:#000"></div>
<div class="o" style="left:112px;top:298px;width:36px;height:36px;box-sizing:border-box;border:2px solid #000"></div>
<div class="o" style="left:144px;top:330px;width:4px;height:4px;background:#000;border:1px solid #fff"></div>
<svg class="o" style="left:9px;top:170px" width="25" height="19"><path d="M22 6v9h-9z" fill="#b6bcc3"/></svg>
<div id="box"><span style="letter-spacing:.13px">Data analysis tools usually run</span><span style="letter-spacing:.3px">off of data which has been</span><span style="letter-spacing:.26px">entered on the 'Datasheet.'</span><span></span><span style="letter-spacing:.25px"><i>Variables</i> are entered in</span><span style="letter-spacing:.2px">columns.  Rows are individual</span><span style="letter-spacing:.25px">data points or observations.</span></div>
</div></body></html>
